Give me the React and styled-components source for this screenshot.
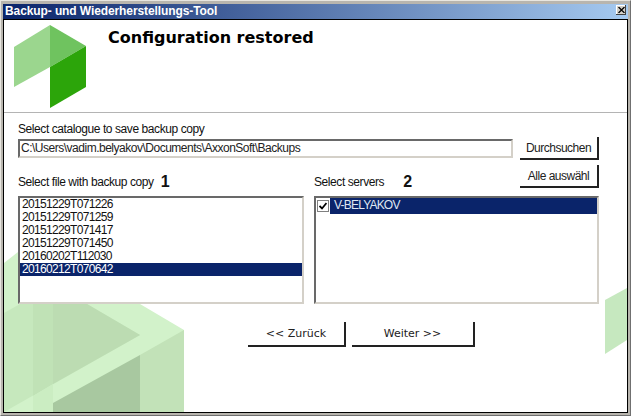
import styled, { createGlobalStyle } from "styled-components";

const GlobalStyle = createGlobalStyle`
  html, body {
    margin: 0;
    padding: 0;
    background: #d4d0c8;
  }
`

const Window = styled.div`
  width: 631px;
  height: 416px;
  box-sizing: border-box;
  display: flex;
  flex-direction: column;
  background: #b8b5ae;
  border: 1px solid #707070;
  border-top-color: #e8e6e0;
  border-left-color: #e8e6e0;
  padding: 3px 2px 2px;
  overflow: hidden;
`

const TitleBar = styled.div`
  height: 15px;
  flex: none;
  display: flex;
  align-items: flex-start;
  justify-content: space-between;
  padding: 0 2px 0 2px;
  background: linear-gradient(90deg, #0a246a, #a6caf0);
  color: #fff;
  font: bold 12px/14px "Liberation Sans", sans-serif;
  letter-spacing: -0.1px;
`

const CloseButton = styled.div`
  box-sizing: border-box;
  width: 10px;
  height: 10px;
  margin: 1px 0 0;
  display: flex;
  align-items: center;
  justify-content: center;
  background: #d4d0c8;
  box-shadow: inset -1px -1px 0 #404040, inset 1px 1px 0 #fff;
`

const Client = styled.div`
  position: relative;
  flex: 1;
  background: #fff;
  border: 1px solid #000;
  overflow: hidden;
`

const Backdrop = styled.svg`
  position: absolute;
  left: 0;
  top: 0;
`

const Content = styled.div`
  position: relative;
  height: 100%;
  display: flex;
  flex-direction: column;
`

const Header = styled.div`
  height: 93px;
  flex: none;
  display: flex;
  box-sizing: border-box;
  border-bottom: 1px solid #b4b4b4;
`

const Logo = styled.svg`
  margin: 5px 0 0 10px;
  flex: none;
`

const Heading = styled.h1`
  margin: 8px 0 0 22px;
  font: bold 16px "DejaVu Sans", sans-serif;
  color: #000;
`

const Form = styled.div`
  padding: 9px 28px 0 14px;
  display: flex;
  flex-direction: column;
`

const Label = styled.div`
  font: 12px/14px "Liberation Sans", sans-serif;
  letter-spacing: -0.42px;
  color: #111;
`

const PathRow = styled.div`
  display: flex;
  justify-content: space-between;
  align-items: flex-start;
  margin-top: 1px;
`

const sunken = `
  box-sizing: border-box;
  background: #fff;
  border: 2px solid;
  border-color: #696969 #d4d0c8 #d4d0c8 #696969;
`

const PathInput = styled.div`
  ${sunken}
  width: 495px;
  height: 19px;
  margin-top: 2px;
  padding-left: 1px;
  font: 12px/15px "Liberation Sans", sans-serif;
  letter-spacing: -0.49px;
  color: #222;
  white-space: nowrap;
`

const FlatButton = styled.div`
  box-sizing: border-box;
  width: ${p => p.$w}px;
  height: ${p => p.$h}px;
  display: flex;
  align-items: center;
  justify-content: center;
  background: #fff;
  border-right: 2px solid #222;
  border-bottom: 2px solid #222;
  color: #222;
  font: ${p => p.$font};
  letter-spacing: ${p => p.$spacing || 0}px;
`

const Columns = styled.div`
  display: flex;
  justify-content: space-between;
  margin-top: 5px;
`

const Column = styled.div`
  width: ${p => p.$w}px;
  display: flex;
  flex-direction: column;
`

const ColumnHead = styled.div`
  height: 31px;
  display: flex;
  align-items: flex-start;
  justify-content: space-between;
`

const HeadText = styled.div`
  display: flex;
  align-items: center;
  height: 18px;
  margin-top: 8px;
`

const Number = styled.span`
  font: bold 16px "Liberation Sans", sans-serif;
  color: #111;
  margin-left: ${p => p.$gap}px;
`

const ListBox = styled.div`
  ${sunken}
  height: 108px;
  font: 12px/13px "Liberation Sans", sans-serif;
  color: #111;
`

const ListRow = styled.div`
  height: 13px;
  padding-left: 2px;
  letter-spacing: -0.67px;
  background: ${p => (p.$selected ? "#0a246a" : "transparent")};
  color: ${p => (p.$selected ? "#fff" : "#111")};
`

const ServerRow = styled.div`
  display: flex;
  align-items: center;
  height: 16px;
`

const CheckBox = styled.div`
  box-sizing: border-box;
  width: 12px;
  height: 12px;
  margin: 0 1px;
  flex: none;
  display: flex;
  align-items: center;
  justify-content: center;
  background: #fff;
  border: 1px solid #808080;
`

const ServerName = styled.div`
  flex: 1;
  height: 16px;
  padding-left: 4px;
  background: #0a246a;
  color: #dfe6f2;
  font: 12px/15px "Liberation Sans", sans-serif;
  letter-spacing: -0.8px;
`

const NavRow = styled.div`
  display: flex;
  gap: 6px;
  margin-top: 18px;
  padding-left: 230px;
`

const files = [
  "20151229T071226",
  "20151229T071259",
  "20151229T071417",
  "20151229T071450",
  "20160202T112030",
  "20160212T070642",
]

const buttonFont = '12px "Liberation Sans", sans-serif'
const navFont = '11px "DejaVu Sans", sans-serif'

export default function App() {
  return <>
    <GlobalStyle/>
    <Window>
      <TitleBar>
        <span>Backup- und Wiederherstellungs-Tool</span>
        <CloseButton>
          <svg width="7" height="6" viewBox="0 0 7 6">
            <path d="M0.5 0 6.5 6M6.5 0 0.5 6" stroke="#000" strokeWidth="1.3"/>
          </svg>
        </CloseButton>
      </TitleBar>
      <Client>
        <Backdrop width="623" height="392" viewBox="4 20 623 392">
          <polygon points="4,263 18,252 18,304 140,304 184,330 184,412 4,412" fill="#d2f2ca"/>
          <polygon points="4,313 20,304 87,304 140,335 4,412" fill="#c6e8bd"/>
          <polygon points="33,304 53,304 53,384 33,396" fill="#c0e2b6"/>
          <polygon points="53,304 87,304 140,335 53,384" fill="#bcdcb2"/>
          <polygon points="33,396 53,384 53,412 33,412" fill="#cbedc2"/>
          <polygon points="140,355 184,330 184,412 140,412" fill="#c2e2b8"/>
          <polygon points="53,403 140,355 140,412 53,412" fill="#a8c8a0"/>
          <polygon points="605,300 627,288 627,340 605,354" fill="#c6e8bf"/>
        </Backdrop>
        <Content>
          <Header>
            <Logo width="72" height="83" viewBox="0 0 72 83">
              <polygon points="0,22 36,0 36,42 0,62" fill="#9bd68e"/>
              <polygon points="36,0 72,21 36,42" fill="#6fc35f"/>
              <polygon points="36,42 72,21 72,62 36,83" fill="#2ca50a"/>
            </Logo>
            <Heading>Configuration restored</Heading>
          </Header>
          <Form>
            <Label>Select catalogue to save backup copy</Label>
            <PathRow>
              <PathInput>C:\Users\vadim.belyakov\Documents\AxxonSoft\Backups</PathInput>
              <FlatButton $w={79} $h={23} $font={buttonFont} $spacing={-0.5}>Durchsuchen</FlatButton>
            </PathRow>
            <Columns>
              <Column $w={286}>
                <ColumnHead>
                  <HeadText>
                    <Label>Select file with backup copy</Label>
                    <Number $gap={7}>1</Number>
                  </HeadText>
                </ColumnHead>
                <ListBox>
                  {files.map((f, i) => (
                    <ListRow key={f} $selected={i === 5}>{f}</ListRow>
                  ))}
                </ListBox>
              </Column>
              <Column $w={285}>
                <ColumnHead>
                  <HeadText>
                    <Label>Select servers</Label>
                    <Number $gap={19}>2</Number>
                  </HeadText>
                  <FlatButton $w={79} $h={23} $font={buttonFont} $spacing={-0.5}>Alle auswähl</FlatButton>
                </ColumnHead>
                <ListBox>
                  <ServerRow>
                    <CheckBox>
                      <svg width="8" height="8" viewBox="0 0 8 8">
                        <path d="M0.5 4 3 6.5 7.5 1" fill="none" stroke="#000" strokeWidth="1.8"/>
                      </svg>
                    </CheckBox>
                    <ServerName>V-BELYAKOV</ServerName>
                  </ServerRow>
                </ListBox>
              </Column>
            </Columns>
            <NavRow>
              <FlatButton $w={98} $h={25} $font={navFont}>&lt;&lt; Zurück</FlatButton>
              <FlatButton $w={123} $h={25} $font={navFont}>Weiter &gt;&gt;</FlatButton>
            </NavRow>
          </Form>
        </Content>
      </Client>
    </Window>
  </>
}
